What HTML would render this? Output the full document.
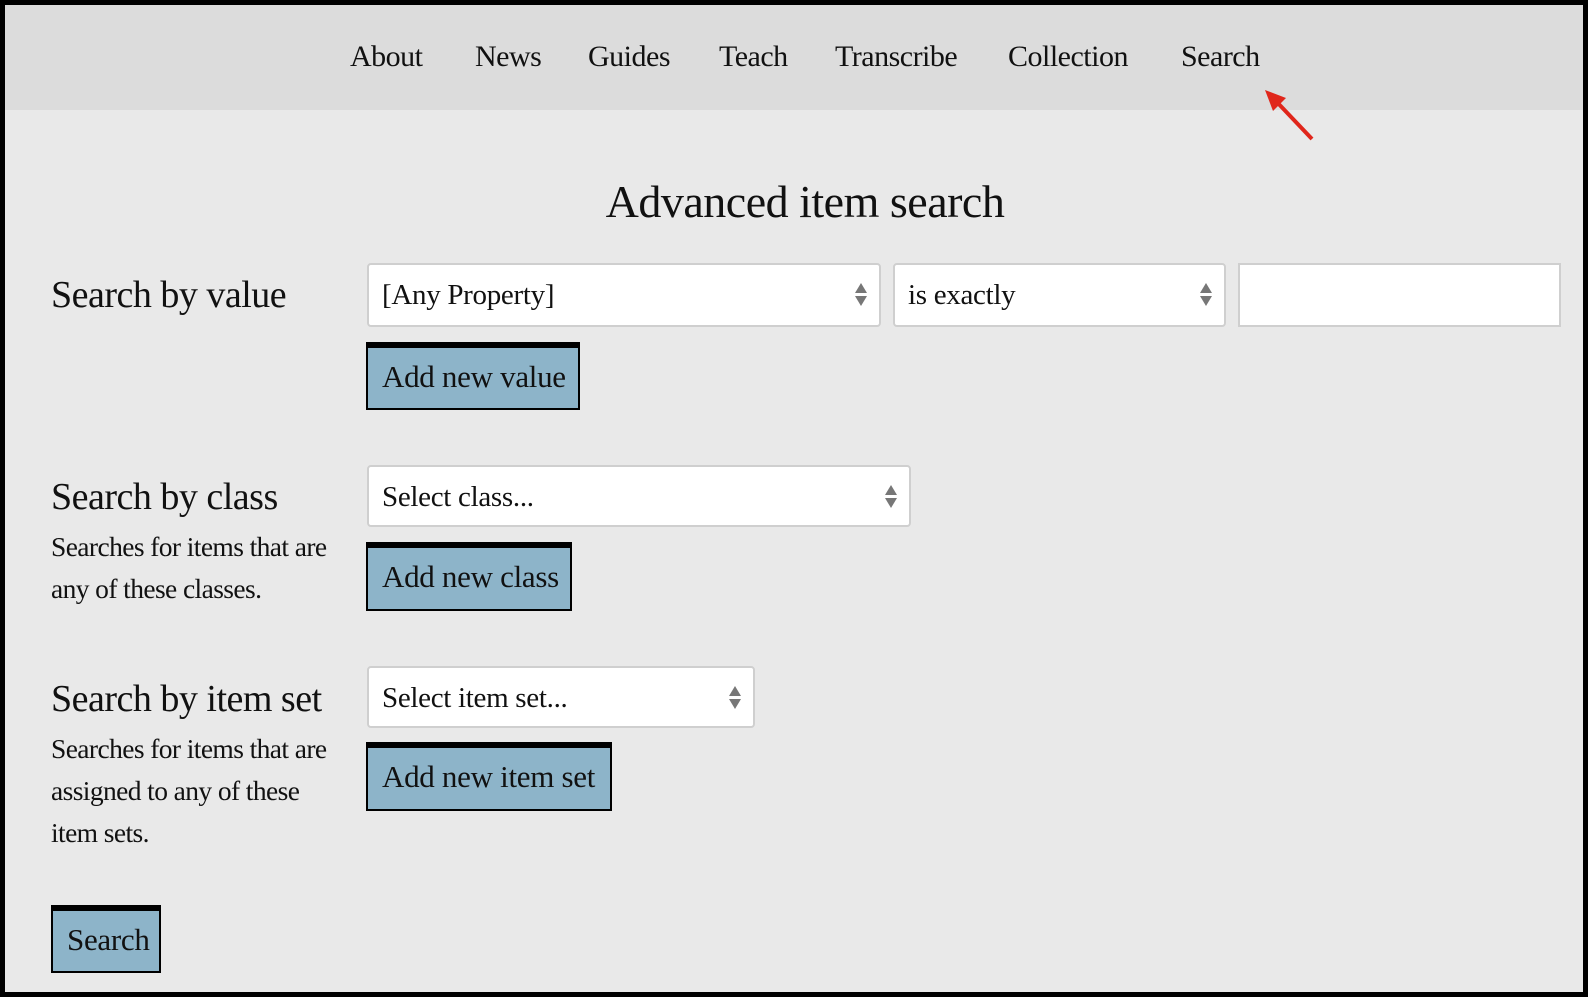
<!DOCTYPE html>
<html><head><meta charset="utf-8"><style>
*{margin:0;padding:0;box-sizing:border-box}
body{width:1588px;height:997px;background:#000;position:relative;overflow:hidden;font-family:"Liberation Serif",serif;color:#111}
#pg{position:absolute;left:5px;top:5px;width:1578px;height:987px;background:#e9e9e9}
#nav{position:absolute;left:0;top:0;width:1578px;height:105px;background:#dcdcdc}
.a{position:absolute;white-space:nowrap;letter-spacing:-0.5px}
.nv{font-size:30px;top:35px}
.sel,.inp{position:absolute;background:#fff;border:2px solid #cfcfcf;border-radius:4px;font-size:29px;padding-left:13px;line-height:60px;letter-spacing:-0.3px}
.inp{border-radius:0}
.arr{position:absolute;right:12px;top:18px;width:12px}
.arr:before{content:"";display:block;border-left:6px solid transparent;border-right:6px solid transparent;border-bottom:10px solid #777;margin-bottom:3px}
.arr:after{content:"";display:block;border-left:6px solid transparent;border-right:6px solid transparent;border-top:10px solid #777}
.btn{position:absolute;background:#8db4c9;border:2px solid #000;border-top:6px solid #000;font-size:31px;padding-left:14px;line-height:58px;letter-spacing:-0.3px}
.h{font-size:38px}
.d{font-size:27.5px;line-height:42px;letter-spacing:-0.6px}
</style></head><body><div id="pg">
<div id="nav"></div>
<div class="a nv" style="left:345px">About</div>
<div class="a nv" style="left:470px">News</div>
<div class="a nv" style="left:583px">Guides</div>
<div class="a nv" style="left:714px">Teach</div>
<div class="a nv" style="left:830px">Transcribe</div>
<div class="a nv" style="left:1003px">Collection</div>
<div class="a nv" style="left:1176px">Search</div>
<svg style="position:absolute;left:1255px;top:80px" width="60" height="60"><line x1="52" y1="54" x2="14" y2="14" stroke="#e0261b" stroke-width="4"/><polygon points="5,5 26,13 13,26" fill="#e0261b"/></svg>
<div class="a" style="left:0;width:1600px;text-align:center;top:170px;font-size:46px">Advanced item search</div>

<div class="a h" style="left:46px;top:268px">Search by value</div>
<div class="sel" style="left:362px;top:258px;width:514px;height:64px">[Any Property]<span class="arr"></span></div>
<div class="sel" style="left:888px;top:258px;width:333px;height:64px">is exactly<span class="arr"></span></div>
<div class="inp" style="left:1233px;top:258px;width:323px;height:64px"></div>
<div class="btn" style="left:361px;top:337px;width:214px;height:68px">Add new value</div>

<div class="a h" style="left:46px;top:470px">Search by class</div>
<div class="a d" style="left:46px;top:521px">Searches for items that are<br>any of these classes.</div>
<div class="sel" style="left:362px;top:460px;width:544px;height:62px">Select class...<span class="arr"></span></div>
<div class="btn" style="left:361px;top:537px;width:206px;height:69px">Add new class</div>

<div class="a h" style="left:46px;top:672px">Search by item set</div>
<div class="a d" style="left:46px;top:723px">Searches for items that are<br>assigned to any of these<br>item sets.</div>
<div class="sel" style="left:362px;top:661px;width:388px;height:62px">Select item set...<span class="arr"></span></div>
<div class="btn" style="left:361px;top:737px;width:246px;height:69px">Add new item set</div>

<div class="btn" style="left:46px;top:900px;width:110px;height:68px">Search</div>
</div></body></html>
